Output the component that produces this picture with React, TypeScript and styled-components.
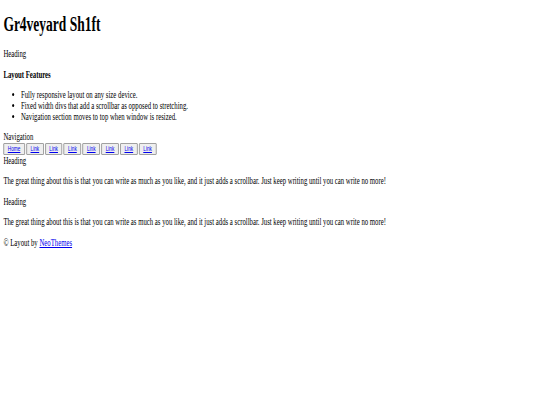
import React from 'react'
import styled, { createGlobalStyle } from 'styled-components'

const GlobalStyle = createGlobalStyle`
    html, body {
        margin: 0;
        padding: 0;
        background: #ffffff;
    }
    body {
        font-family: "Liberation Serif", "Times New Roman", serif;
        font-size: 10px;
        line-height: 11px;
        color: #000000;
    }
`

// the reference is drawn with a narrow face, so the page is squeezed sideways
const SQUEEZE = 0.675

const Page = styled.div`
    width: ${ 540 / SQUEEZE }px;
    padding: 1px 5px 0;
    box-sizing: border-box;
    transform: scaleX(${ SQUEEZE });
    transform-origin: 0 0;
`

const Title = styled.h1`
    font-size: 20px;
    line-height: 23px;
    font-weight: bold;
    margin: 12px 0;
`

const Heading = styled.div`
    margin: 9px 0 10px;
`

const Features = styled.h4`
    font-size: 10px;
    font-weight: bold;
    margin: 9px 0;
`

const List = styled.ul`
    margin: 9px 0;
    padding-left: 26px;
`

const Nav = styled.nav`
    margin: 9px 0 0;
`

const NavRow = styled.div`
    display: flex;
    gap: 2px;
    margin-top: 1px;
`

const NavButton = styled.button`
    font-family: "Liberation Sans", Arial, sans-serif;
    font-size: 7px;
    line-height: 8px;
    padding: 1px 5.5px;
    height: 12px;
    background: #efefef;
    border: 1px solid #8f8f8f;
    border-radius: 1px;
`

const NavLink = styled.a`
    color: #0000ee;
    text-decoration: underline;
`

const Section = styled.section`
    margin: 0;
`

const Text = styled.p`
    margin: 9px 0 10px;
`

const Footer = styled.footer`
    margin: 10px 0;
`

const Link = styled.a`
    color: #0000ee;
    text-decoration: underline;
`

const navItems = ['Home', 'Link', 'Link', 'Link', 'Link', 'Link', 'Link', 'Link']

const blurb = 'The great thing about this is that you can write as much as you like, and it just adds a scrollbar. Just keep writing until you can write no more!'

export default function App() {
    return (
        <>
            <GlobalStyle />
            <Page>
                <Title>Gr4veyard Sh1ft</Title>
                <Heading>Heading</Heading>
                <Features>Layout Features</Features>
                <List>
                    <li>Fully responsive layout on any size device.</li>
                    <li>Fixed width divs that add a scrollbar as opposed to stretching.</li>
                    <li>Navigation section moves to top when window is resized.</li>
                </List>
                <Nav>
                    <div>Navigation</div>
                    <NavRow>
                        { navItems.map((item, i) => (
                            <NavButton key={ i }>
                                <NavLink href="#">{ item }</NavLink>
                            </NavButton>
                        )) }
                    </NavRow>
                </Nav>
                <Section>
                    <div>Heading</div>
                    <Text>{ blurb }</Text>
                </Section>
                <Section>
                    <div>Heading</div>
                    <Text>{ blurb }</Text>
                </Section>
                <Footer>© Layout by <Link href="#">NeoThemes</Link></Footer>
            </Page>
        </>
    )
}
